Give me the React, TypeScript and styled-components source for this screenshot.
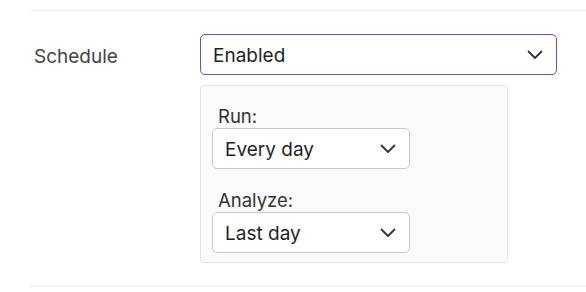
import React from "react";
import styled, { createGlobalStyle } from "styled-components";

const Global = createGlobalStyle`
  html, body { margin: 0; padding: 0; background: #ffffff; }
  body { font-family: Inter, "Noto Sans", sans-serif; color: #222; }
`;

const Page = styled.div`
  padding-top: 10px;
  padding-left: 30px;
  width: 586px;
  box-sizing: border-box;
`;

const Row = styled.div`
  display: grid;
  grid-template-columns: 170px 357px;
  border-top: 1px solid #ececec;
  border-bottom: 1px solid #ececec;
  padding: 23px 0 23px;
`;

const RowLabel = styled.div`
  padding-left: 4px;
  font-size: 19px;
  line-height: 45px;
  color: #444;
`;

const Field = styled.div`
  display: flex;
  flex-direction: column;
  gap: 10px;
`;

const SelectBox = styled.div<{ $active?: boolean; $width: number }>`
  display: flex;
  align-items: center;
  justify-content: space-between;
  box-sizing: border-box;
  width: ${(p) => p.$width}px;
  height: 41px;
  padding: 1px 13px 0 12px;
  border: 1px solid ${(p) => (p.$active ? "#6c4ad6" : "#c9c9c9")};
  border-radius: 5px;
  background: #fff;
  font-size: 19px;
  color: #1f1f1f;
`;

const Panel = styled.div`
  box-sizing: border-box;
  width: 308px;
  border: 1px solid #e4e4e4;
  border-radius: 3px;
  background: #fafafa;
  padding: 20px 10px 9px 11px;
  display: flex;
  flex-direction: column;
  gap: 21px;
`;

const Group = styled.div`
  display: flex;
  flex-direction: column;
  gap: 2px;
`;

const GroupLabel = styled.div`
  padding-left: 6px;
  font-size: 18.5px;
  line-height: 20px;
  color: #333;
`;

const Chevron = () => (
  <svg width="16" height="10" viewBox="0 0 16 10" fill="none">
    <polyline points="1.5,1.5 8,8 14.5,1.5" stroke="#333" strokeWidth="1.8" strokeLinecap="round" strokeLinejoin="round" />
  </svg>
);

const Select = ({ value, width, active }: { value: string; width: number; active?: boolean }) => (
  <SelectBox $width={width} $active={active}>
    <span>{value}</span>
    <Chevron />
  </SelectBox>
);

export default function App() {
  return (
    <>
      <Global />
      <Page>
        <Row>
          <RowLabel>Schedule</RowLabel>
          <Field>
            <Select value="Enabled" width={357} active />
            <Panel>
              <Group>
                <GroupLabel>Run:</GroupLabel>
                <Select value="Every day" width={198} />
              </Group>
              <Group>
                <GroupLabel>Analyze:</GroupLabel>
                <Select value="Last day" width={198} />
              </Group>
            </Panel>
          </Field>
        </Row>
      </Page>
    </>
  );
}
